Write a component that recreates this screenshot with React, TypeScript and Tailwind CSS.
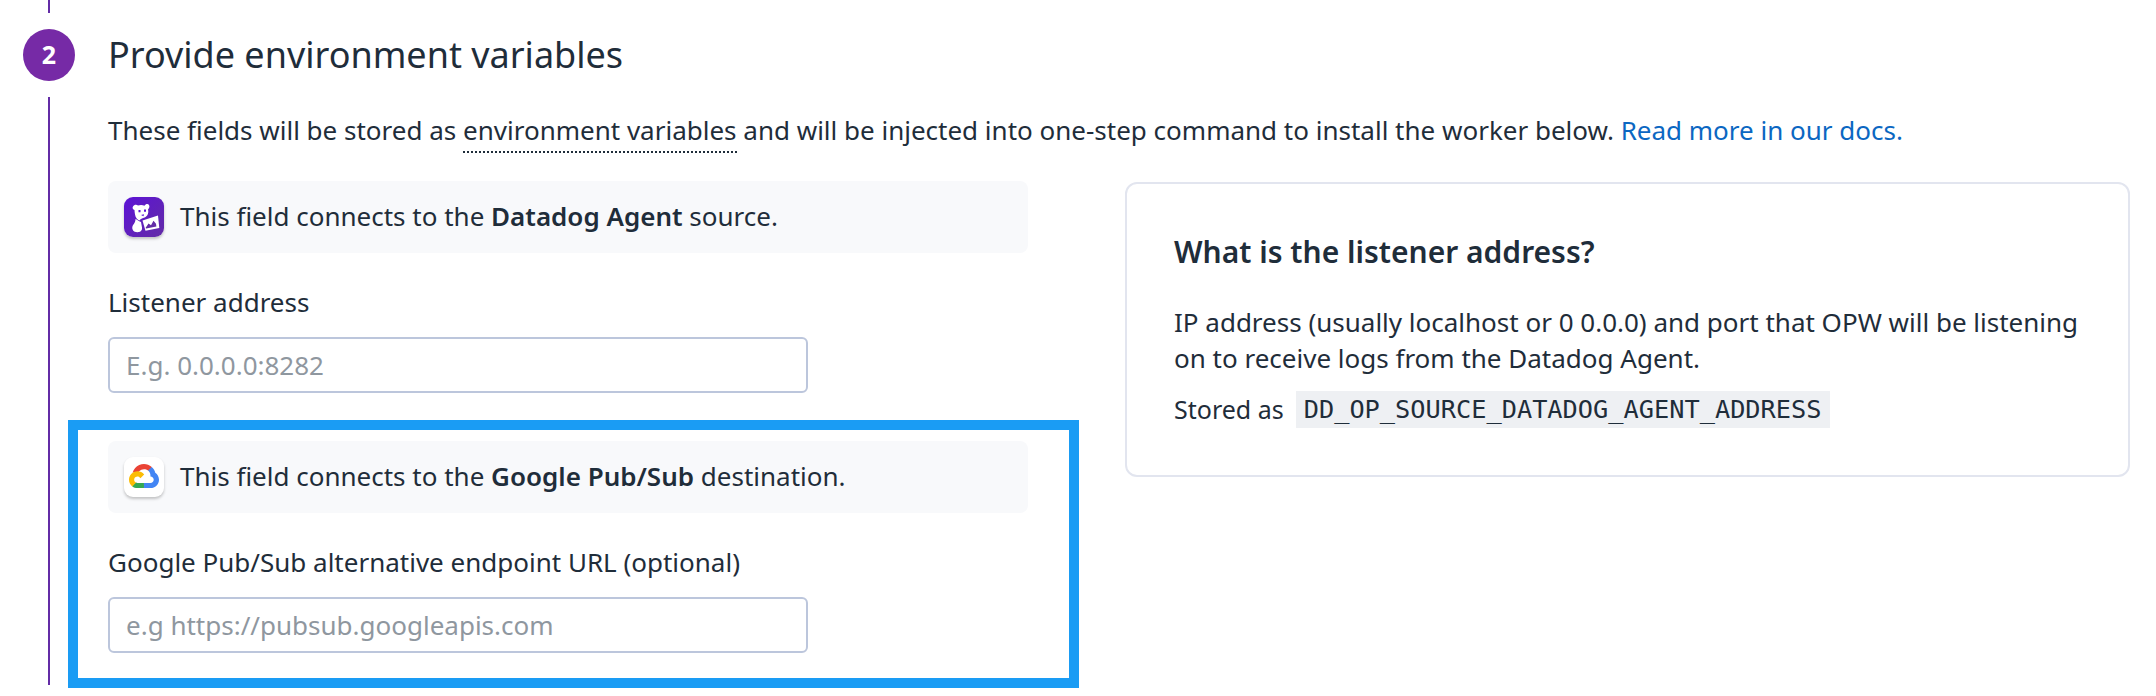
function DatadogIcon() {
  return (
    <svg viewBox="0 0 40 40" className="h-10 w-10 shrink-0 rounded-[9px] shadow-[0_2px_3px_rgba(0,0,0,0.22)]">
      <defs>
        <linearGradient id="dd" x1="0" y1="0" x2="1" y2="1">
          <stop offset="0" stopColor="#5c12d6" />
          <stop offset="1" stopColor="#632ca6" />
        </linearGradient>
      </defs>
      <rect width="40" height="40" fill="url(#dd)" />
      {/* ears and head */}
      <path
        d="M9 9.500c1-2 3.500-2.500 5-1 2-.8 4.500-.8 6.500.2 1-1.700 3.500-2.200 4.500-.7 1 1.500 0 3.500-1 4.500.6 2 .3 4-.7 5.800-1 1.700-3 2.500-4.800 3-1.500.5-2.500 1.200-3 2.200-2-.5-4-3-4.500-6-.3-2.200-.5-3.500-.5-4.500-1.500-.5-2.500-2-1.500-3.500z"
        fill="#fff"
      />
      {/* body */}
      <path d="M11.500 22c2 1 4 2.500 5.500 3l1 5.500c.3 2-.5 3.500-2 4.200-2.500 1-6 .5-7.200-1.700-1.200-2.200-.3-4.600 1-6 1-1.200 1.700-3 1.700-5z" fill="#fff" />
      <path d="M14.500 13h2v2.200h-2zM20 12.500h2v2.200h-2zM17 18l3-.8-.5 2z" fill="#5c12d6" />
      {/* card held in the mouth */}
      <path d="M18.500 23.500l15.500-5 1.300 12.500-13.800 2.700z" fill="#fff" />
      <path d="M21.500 31l3-4.500 2.500 1.800 2.500-4.500 2.500 3 .4 2.700-10.200 2z" fill="#632ca6" />
    </svg>
  );
}

function GoogleCloudIcon() {
  return (
    <div className="flex h-10 w-10 shrink-0 items-center justify-center rounded-[9px] bg-white shadow-[0_2px_3px_rgba(0,0,0,0.22)]">
      <svg viewBox="0 0 256 206" className="w-[30px]">
        <path d="M170.252 56.819l22.253-22.253 1.483-9.37C153.437-11.677 88.976-7.496 52.42 33.92 42.267 45.423 34.734 59.764 30.717 74.573l7.97-1.123 44.505-7.34 3.436-3.513c19.797-21.742 53.27-24.667 76.128-6.168l7.496.39z" fill="#EA4335" />
        <path d="M224.205 73.918c-5.115-18.836-15.616-35.769-30.217-48.722l-31.232 31.232c13.188 10.776 20.701 27.01 20.379 44.037v5.544c15.351 0 27.797 12.445 27.797 27.796 0 15.352-12.446 27.485-27.797 27.485h-55.671l-5.466 5.934v33.34l5.466 5.231h55.671c39.93.311 72.552-31.494 72.863-71.424.188-24.203-11.745-46.893-31.793-60.453" fill="#4285F4" />
        <path d="M71.87 205.796h55.593V161.29H71.87c-3.961-.001-7.797-.852-11.399-2.498l-7.887 2.42-22.409 22.253-1.952 7.574c12.567 9.489 27.9 14.825 43.647 14.757" fill="#34A853" />
        <path d="M71.87 61.425C31.94 61.664-.237 94.228.001 134.159c.133 22.295 10.547 43.287 28.222 56.88l32.248-32.246c-13.991-6.322-20.208-22.786-13.887-36.776 6.32-13.99 22.786-20.208 36.775-13.888 6.163 2.785 11.099 7.723 13.886 13.888l32.248-32.248C115.772 68.446 94.56 61.339 71.87 61.425" fill="#FBBC05" />
      </svg>
    </div>
  );
}

function FieldBanner({ icon, name, kind }: { icon: React.ReactNode; name: string; kind: string }) {
  return (
    <div className="flex h-[72px] w-[920px] items-center gap-4 rounded-lg bg-[#f8f9fb] pb-[1px] pl-4">
      {icon}
      <span>
        This field connects to the <b className="font-semibold">{name}</b> {kind}.
      </span>
    </div>
  );
}

function Field({ label, placeholder }: { label: string; placeholder: string }) {
  return (
    <>
      <div className="mt-[31px] h-[36px] leading-[36px]">{label}</div>
      <input
        placeholder={placeholder}
        className="mt-[17px] block h-[56px] w-[700px] rounded-md border-2 border-[#bcc6dc] bg-white px-4 outline-none placeholder:text-[#8f979f]"
      />
    </>
  );
}

export default function App() {
  return (
    <div className="flex h-[696px] w-[2156px] overflow-hidden bg-white pl-[23px] font-['Noto_Sans',sans-serif] text-[26px] text-[#1f2d3a]">
      <div className="flex h-[685px] w-[52px] shrink-0 flex-col items-center">
        <div className="h-[13px] w-[2px] bg-[#632ca6]" />
        <div className="mt-4 flex h-[52px] w-[52px] shrink-0 items-center justify-center rounded-full bg-[#762aa6] text-[25px] font-bold text-white">
          2
        </div>
        <div className="mt-4 w-[2px] grow bg-[#632ca6]" />
      </div>

      <div className="ml-[33px] flex w-[2022px] flex-col">
        <h2 className="mt-[31px] h-[48px] text-[36px] leading-[48px]">Provide environment variables</h2>
        <p className="mt-[29px] h-[44px] leading-[44px]">
          These fields will be stored as{" "}
          <span className="border-b-2 border-dotted border-[#1f2d3a] pb-[3px]">environment variables</span> and will be
          injected into one-step command to install the worker below.{" "}
          <a className="text-[#0b67c2]">Read more in our docs.</a>
        </p>

        <div className="mt-[5px] flex items-start gap-[97px]">
          <div className="w-[920px] shrink-0">
            <div className="mt-[24px]">
              <FieldBanner icon={<DatadogIcon />} name="Datadog Agent" kind="source" />
              <Field label="Listener address" placeholder="E.g. 0.0.0.0:8282" />
            </div>

            <div className="mt-[27px] -ml-[40px] h-[268px] w-[1011px] border-[10px] border-[#1a9cf4] pt-[11px] pl-[30px]">
              <FieldBanner icon={<GoogleCloudIcon />} name="Google Pub/Sub" kind="destination" />
              <Field label="Google Pub/Sub alternative endpoint URL (optional)" placeholder="e.g https://pubsub.googleapis.com" />
            </div>
          </div>

          <div className="mt-[25px] h-[295px] w-[1005px] shrink-0 rounded-xl border-2 border-[#e2e5ef] pt-[48px] pl-[47px]">
            <h3 className="text-[30px] leading-[40px] font-semibold">What is the listener address?</h3>
            <p className="mt-[32px] leading-[36px]">
              IP address (usually localhost or 0 0.0.0) and port that OPW will be listening
              <br />
              on to receive logs from the Datadog Agent.
            </p>
            <p className="mt-[15px] flex h-[37px] items-center text-[25px]">
              Stored as
              <code className="ml-[12px] h-[37px] bg-[#eef0f3] px-[8px] font-['DejaVu_Sans_Mono',monospace] text-[25.3px] leading-[37px]">
                DD_OP_SOURCE_DATADOG_AGENT_ADDRESS
              </code>
            </p>
          </div>
        </div>
      </div>
    </div>
  );
}
